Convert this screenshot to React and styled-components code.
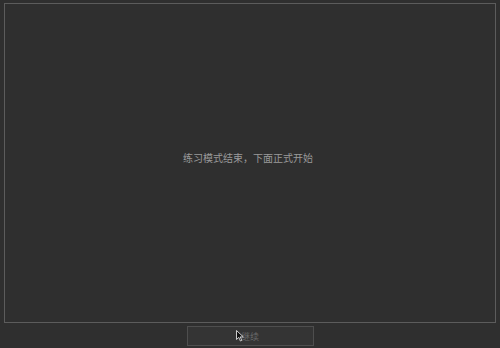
import React from "react";
import styled, { createGlobalStyle } from "styled-components";

const Global = createGlobalStyle`
  html, body {
    margin: 0;
    padding: 0;
    background: #2f2f2f;
    font-family: "Noto Sans CJK SC", "Noto Sans", sans-serif;
  }
`;

const Page = styled.div`
  width: 500px;
  height: 348px;
  box-sizing: border-box;
  padding: 3px 4px 0 4px;
  display: flex;
  flex-direction: column;
  align-items: center;
  background: #2f2f2f;
`;

const Panel = styled.div`
  width: 100%;
  height: 320px;
  box-sizing: border-box;
  border: 1px solid #5c5c5c;
  display: flex;
  align-items: center;
  justify-content: center;
  padding-bottom: 12px;
  padding-right: 4px;
`;

const Message = styled.div`
  color: #9a9a9a;
  font-size: 10px;
  letter-spacing: 0;
`;

const Button = styled.button`
  position: relative;
  margin-top: 3px;
  width: 127px;
  height: 20px;
  box-sizing: border-box;
  border: 1px solid #4e4e4e;
  background: #343434;
  color: #6a6a6a;
  font-family: inherit;
  font-size: 9px;
  padding: 0;
  display: flex;
  align-items: center;
  justify-content: center;
`;

const Cursor = styled.svg`
  position: absolute;
  left: 48px;
  top: 3px;
`;

export default function App() {
  return (
    <>
      <Global />
      <Page>
        <Panel>
          <Message>练习模式结束，下面正式开始</Message>
        </Panel>
        <Button>
          继续
          <Cursor width="8" height="12" viewBox="0 0 8 12">
            <path d="M0.5 0.5 L0.5 9.5 L2.8 7.4 L4.4 11 L5.8 10.4 L4.2 6.9 L7.3 6.9 Z" fill="#111" stroke="#ddd" strokeWidth="0.9" />
          </Cursor>
        </Button>
      </Page>
    </>
  );
}
